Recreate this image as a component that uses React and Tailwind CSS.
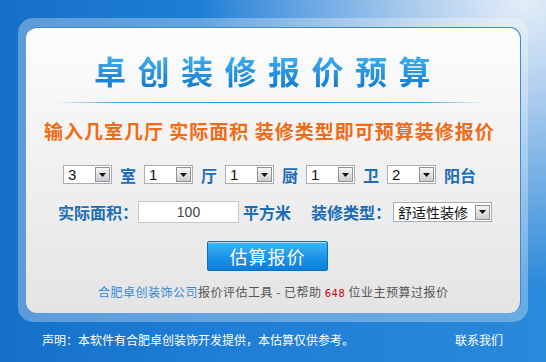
import React from "react";

function Arrow() {
  return (
    <svg width="7" height="4" viewBox="0 0 7 4">
      <path d="M0 0h7L3.5 4z" fill="#111" />
    </svg>
  );
}

function Select({ value, w = "w-[49px]", h = "h-[19px]", textCls = "text-[15px] font-['Liberation_Sans',sans-serif]" }) {
  return (
    <div className={`flex items-center ${w} ${h} border border-[#a7adb6] bg-white pl-[4px] pr-[1px]`}>
      <span className={`flex-1 leading-none text-[#111] ${textCls}`}>{value}</span>
      <div className="w-[15px] h-[15px] border border-[#8f9194] bg-gradient-to-b from-[#f6f6f6] to-[#cdcdcd] flex items-center justify-center">
        <Arrow />
      </div>
    </div>
  );
}

function Label({ children, cls = "" }) {
  return <span className={`text-[16px] font-bold leading-none text-[#1b6db8] ${cls}`}>{children}</span>;
}

export default function App() {
  return (
    <div className="w-[546px] h-[362px] overflow-hidden pt-[18px] pl-[18px] font-['Noto_Sans_CJK_SC',sans-serif] bg-[radial-gradient(ellipse_60%_80%_at_96%_0%,#e4eef8_0%,#b3d0ef_30%,rgba(60,140,220,0)_100%),linear-gradient(90deg,#1670c9_0%,#1f7ed5_40%,#2a89d9_100%)]">
      <div className="w-[510px] h-[304px] rounded-[15px] bg-white/30 pt-[9px] pl-[8px] pr-[7px] pb-[9px]">
        <div className="h-full rounded-[11px] bg-gradient-to-b from-[#fdfdfd] to-[#e4e4e4] border-t border-r border-[#3f8bd3] flex flex-col items-start">
          <h1 className="mt-[23px] ml-[68px] text-[32px] leading-[38px] font-bold tracking-[11.5px] bg-gradient-to-b from-[#46b6f2] to-[#0b7ad0] bg-clip-text text-transparent">
            卓创装修报价预算
          </h1>
          <div className="mt-[13px] ml-[29px] w-[430px] h-px bg-[linear-gradient(90deg,rgba(59,160,220,0)_0%,#3ba2dc_15%,#2a98d8_50%,#3ba2dc_85%,rgba(59,160,220,0)_100%)]" />
          <p className="mt-[16px] ml-[18px] text-[19px] leading-[24px] font-bold text-[#f26a14] tracking-[1px] whitespace-pre">
            输入几室几厅 实际面积 装修类型即可预算装修报价
          </p>
          <div className="mt-[22px] ml-[37px] flex items-center gap-[8px]">
            <Select value="3" />
            <Label>室</Label>
            <Select value="1" />
            <Label>厅</Label>
            <Select value="1" />
            <Label>厨</Label>
            <Select value="1" />
            <Label>卫</Label>
            <Select value="2" />
            <Label>阳台</Label>
          </div>
          <div className="mt-[17px] ml-[32px] flex items-center">
            <Label>实际面积：</Label>
            <div className="w-[101px] h-[22px] border border-[#c3c7cc] bg-white flex items-center justify-center text-[14px] text-[#444] font-['Liberation_Sans',sans-serif]">
              100
            </div>
            <Label cls="ml-[4px]">平方米</Label>
            <Label cls="ml-[20px]">装修类型：</Label>
            <Select value="舒适性装修" w="w-[99px] ml-[2px]" h="h-[20px]" textCls="text-[14px]" />
          </div>
          <button className="mt-[18px] ml-[181px] w-[121px] h-[30px] rounded-[2px] border border-[#0f6dbf] bg-gradient-to-b from-[#44b6f6] via-[#1d95e8] to-[#0a7fd9] text-white text-[18px] leading-none tracking-[1px] shadow-[inset_0_1px_0_rgba(255,255,255,0.5)]">
            估算报价
          </button>
          <p className="mt-[13px] ml-[72px] text-[12px] leading-[16px] text-[#555] tracking-[0.5px] whitespace-pre">
            <span className="text-[#3489d6]">合肥卓创装饰公司</span>报价评估工具 - 已帮助 <span className="text-[#d10000] text-[10px] font-['DejaVu_Sans',sans-serif]">648</span> 位业主预算过报价
          </p>
        </div>
      </div>
      <div className="mt-[9px] ml-[24px] w-[461px] flex justify-between text-[12px] leading-[18px] text-white">
        <span>声明：本软件有合肥卓创装饰开发提供，本估算仅供参考。</span>
        <span>联系我们</span>
      </div>
    </div>
  );
}
